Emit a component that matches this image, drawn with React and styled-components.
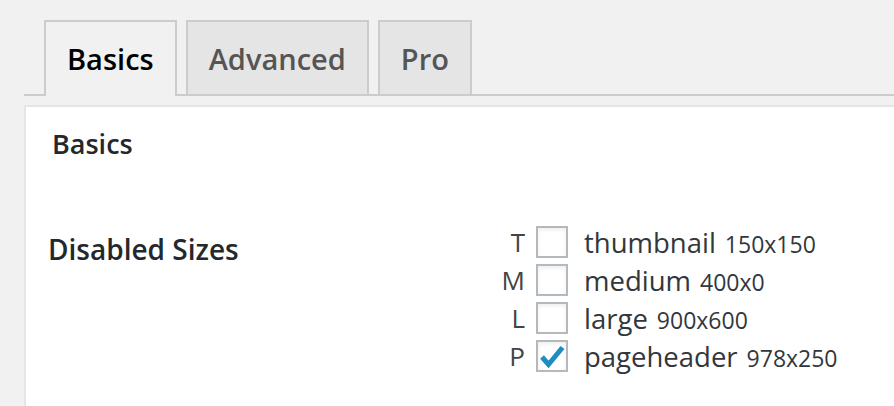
import React from "react";
import styled, { createGlobalStyle } from "styled-components";

const GlobalStyle = createGlobalStyle`
  body {
    margin: 0;
    background: #f1f1f1;
    font-family: "Open Sans", "Noto Sans", sans-serif;
    color: #444;
  }
`;

const sizes = [
  { key: "T", name: "thumbnail", dims: "150x150", checked: false },
  { key: "M", name: "medium", dims: "400x0", checked: false },
  { key: "L", name: "large", dims: "900x600", checked: false },
  { key: "P", name: "pageheader", dims: "978x250", checked: true },
];

const Wrap = styled.div`
  padding: 20px 0 0 24px;
  height: 386px;
  overflow: hidden;
`;

const TabBar = styled.nav`
  display: flex;
  gap: 9px;
  padding-left: 20px;
  border-bottom: 2px solid #ccc;
`;

const Tab = styled.a`
  display: block;
  box-sizing: border-box;
  padding: 0 21px;
  border: 2px solid #ccc;
  border-bottom: none;
  background: ${(p) => (p.active ? "#f1f1f1" : "#e5e5e5")};
  color: ${(p) => (p.active ? "#000" : "#555")};
  font-size: 29px;
  font-weight: 600;
  line-height: 74px;
  text-decoration: none;
  margin-bottom: ${(p) => (p.active ? "-2px" : "0")};
  height: ${(p) => (p.active ? "76px" : "74px")};
`;

const Panel = styled.section`
  margin-top: 9px;
  background: #fff;
  border-top: 2px solid #e5e5e5;
  border-left: 2px solid #e5e5e5;
  padding: 0 0 40px 26px;
  min-height: 300px;
`;

const Heading = styled.h3`
  margin: 0;
  padding-top: 17px;
  font-size: 27px;
  font-weight: 600;
  line-height: 40px;
  color: #23282d;
`;

const FormRow = styled.div`
  display: flex;
  margin-top: 62px;
`;

const RowLabel = styled.div`
  width: 441px;
  margin-left: -4px;
  font-size: 28px;
  font-weight: 600;
  line-height: 40px;
  color: #23282d;
  padding-top: 3px;
`;

const SizeList = styled.div`
  display: flex;
  flex-direction: column;
  gap: 6px;
`;

const SizeItem = styled.label`
  display: flex;
  align-items: center;
  height: 32px;
`;

const Letter = styled.span`
  width: 36px;
  margin-right: 11px;
  text-align: right;
  font-size: 26px;
  color: #444;
`;

const Box = styled.span`
  display: inline-flex;
  box-sizing: border-box;
  width: 32px;
  height: 32px;
  border: 2px solid #b4b9be;
  background: #fff;
  box-shadow: inset 0 2px 4px rgba(0, 0, 0, 0.07);
`;

const Name = styled.span`
  margin-left: 16px;
  font-size: 27.5px;
  color: #32373c;
`;

const Dims = styled.span`
  font-size: 23px;
  margin-left: 9px;
`;

const Check = () => (
  <svg width="28" height="28" viewBox="0 0 28 28">
    <polyline
      points="4,15 10.5,22.5 24.5,5.5"
      fill="none"
      stroke="#1e8cbe"
      strokeWidth="5"
    />
  </svg>
);

export default function App() {
  return (
    <>
      <GlobalStyle />
      <Wrap>
        <TabBar>
          <Tab active>Basics</Tab>
          <Tab>Advanced</Tab>
          <Tab>Pro</Tab>
        </TabBar>
        <Panel>
          <Heading>Basics</Heading>
          <FormRow>
            <RowLabel>Disabled Sizes</RowLabel>
            <SizeList>
              {sizes.map((s) => (
                <SizeItem key={s.key}>
                  <Letter>{s.key}</Letter>
                  <Box>{s.checked && <Check />}</Box>
                  <Name>
                    {s.name}
                    <Dims>{s.dims}</Dims>
                  </Name>
                </SizeItem>
              ))}
            </SizeList>
          </FormRow>
        </Panel>
      </Wrap>
    </>
  );
}
